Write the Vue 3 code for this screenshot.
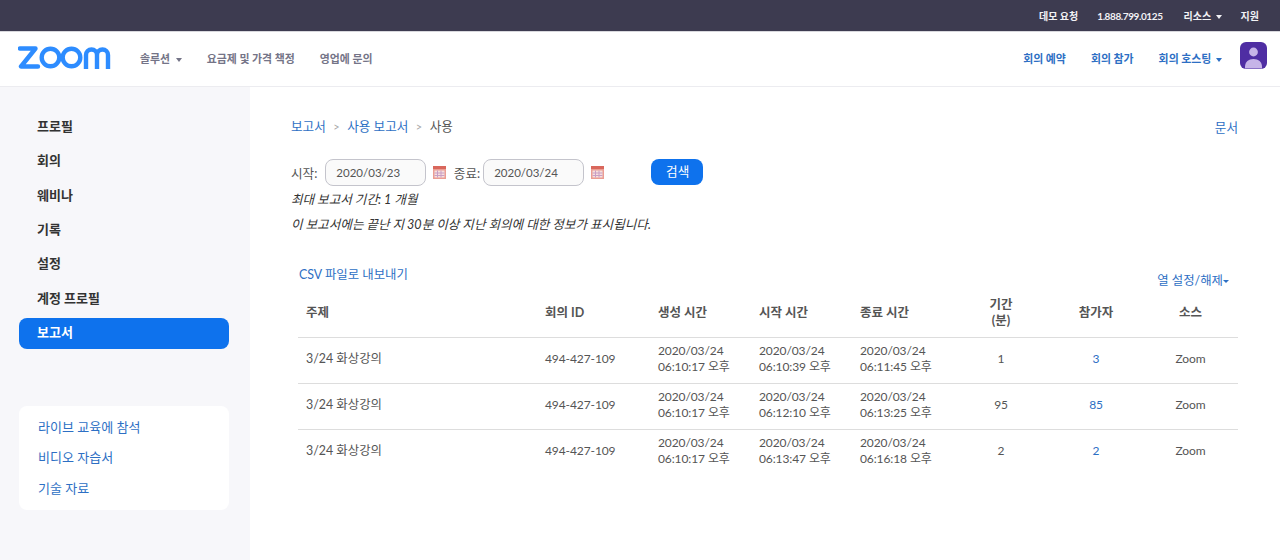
<template>
  <div class="page">
    <div class="topbar">
      <a>데모 요청</a>
      <a class="phone">1.888.799.0125</a>
      <a>리소스 <i class="caret"></i></a>
      <a>지원</a>
    </div>

    <header class="nav">
      <svg class="logo" width="94" height="23" viewBox="0 0 94 23" fill="none" stroke="#2d8cff" stroke-width="4.4">
        <path d="M2 2.500h15.500L3 20.500h17" stroke-linejoin="round" stroke-linecap="round" />
        <circle cx="32.500" cy="11.500" r="8.800" />
        <circle cx="53.500" cy="11.500" r="8.800" />
        <path d="M68 23V9a5.500 5.500 0 0 1 11 0V23M79 9a5.500 5.500 0 0 1 11 0V23" />
      </svg>
      <nav class="nav-left">
        <a>솔루션 <i class="caret"></i></a>
        <a>요금제 및 가격 책정</a>
        <a>영업에 문의</a>
      </nav>
      <nav class="nav-right">
        <a>회의 예약</a>
        <a>회의 참가</a>
        <a>회의 호스팅 <i class="caret"></i></a>
        <svg class="avatar" width="27" height="27" viewBox="0 0 27 27">
          <rect width="27" height="27" rx="6" fill="#4f2ea3" />
          <circle cx="13.500" cy="10" r="4.400" fill="#c6b4e8" />
          <path d="M5 26.500v-2c0-4.500 3.500-7.500 8.500-7.500s8.500 3 8.500 7.500v2z" fill="#c6b4e8" />
        </svg>
      </nav>
    </header>

    <div class="body">
      <aside class="side">
        <ul class="menu">
          <li v-for="item in menu" :key="item" :class="{ active: item === '보고서' }">{{ item }}</li>
        </ul>
        <div class="help">
          <a>라이브 교육에 참석</a>
          <a>비디오 자습서</a>
          <a>기술 자료</a>
        </div>
      </aside>

      <main class="main">
        <div class="crumbs">
          <div>
            <a>보고서</a><span class="sep">&gt;</span><a>사용 보고서</a><span class="sep">&gt;</span><span>사용</span>
          </div>
          <a class="docs">문서</a>
        </div>

        <div class="search">
          <label>시작:</label>
          <span class="date">2020/03/23</span>
          <svg class="cal" width="13" height="13" viewBox="0 0 13 13">
            <rect width="13" height="13" fill="#eb9d92" />
            <rect width="13" height="3" fill="#d9675c" />
            <path d="M1.500 4.500h10v7h-10z" fill="#f6dfdc" />
            <path d="M1.500 7h10M1.500 9.500h10M4.500 4.500v7M8 4.500v7" stroke="#c99ec4" stroke-width="1" />
          </svg>
          <label class="to">종료:</label>
          <span class="date">2020/03/24</span>
          <svg class="cal" width="13" height="13" viewBox="0 0 13 13">
            <rect width="13" height="13" fill="#eb9d92" />
            <rect width="13" height="3" fill="#d9675c" />
            <path d="M1.500 4.500h10v7h-10z" fill="#f6dfdc" />
            <path d="M1.500 7h10M1.500 9.500h10M4.500 4.500v7M8 4.500v7" stroke="#c99ec4" stroke-width="1" />
          </svg>
          <button class="btn">검색</button>
        </div>
        <p class="note first">최대 보고서 기간: 1 개월</p>
        <p class="note">이 보고서에는 끝난 지 30분 이상 지난 회의에 대한 정보가 표시됩니다.</p>

        <div class="tools">
          <a>CSV 파일로 내보내기</a>
          <a class="cols">열 설정/해제<i class="caret small"></i></a>
        </div>

        <table>
          <thead>
            <tr>
              <th class="c1">주제</th>
              <th class="c2">회의 ID</th>
              <th class="c3">생성 시간</th>
              <th class="c3">시작 시간</th>
              <th class="c3">종료 시간</th>
              <th class="c4 mid">기간<br />(분)</th>
              <th class="c5 mid">참가자</th>
              <th class="c6 mid">소스</th>
            </tr>
          </thead>
          <tbody>
            <tr v-for="row in rows" :key="row.start">
              <td class="topic">3/24 화상강의</td>
              <td>494-427-109</td>
              <td>2020/03/24<br />06:10:17 오후</td>
              <td>2020/03/24<br />{{ row.start }} 오후</td>
              <td>2020/03/24<br />{{ row.end }} 오후</td>
              <td class="mid">{{ row.mins }}</td>
              <td class="mid"><a class="count">{{ row.people }}</a></td>
              <td class="mid">Zoom</td>
            </tr>
          </tbody>
        </table>
      </main>
    </div>
  </div>
</template>

<script setup>
const menu = ['프로필', '회의', '웨비나', '기록', '설정', '계정 프로필', '보고서']

const rows = [
  { start: '06:10:39', end: '06:11:45', mins: 1, people: 3 },
  { start: '06:12:10', end: '06:13:25', mins: 95, people: 85 },
  { start: '06:13:47', end: '06:16:18', mins: 2, people: 2 }
]
</script>

<style>
body {
  background: #fff;
}
</style>

<style scoped>
.page {
  height: 560px;
  overflow: hidden;
  display: flex;
  flex-direction: column;
  font-family: Lato, "Noto Sans CJK KR", sans-serif;
  font-size: 12.600px;
  color: #555;
}
a {
  color: #2d6fc4;
}
.caret {
  display: inline-block;
  width: 0;
  height: 0;
  margin-left: 2px;
  vertical-align: middle;
  border-top: 4px solid currentColor;
  border-left: 3.500px solid transparent;
  border-right: 3.500px solid transparent;
}
.caret.small {
  margin-left: 0;
  border-top-width: 3px;
  border-left-width: 3px;
  border-right-width: 3px;
}
.topbar {
  height: 31px;
  flex: none;
  background: #3d3b50;
  display: flex;
  justify-content: flex-end;
  align-items: center;
  gap: 19px;
  padding-right: 21px;
  font-size: 10px;
  font-weight: 700;
}
.topbar a {
  color: #f2f2f5;
}
.topbar .phone {
  letter-spacing: -0.4px;
  margin-right: 2px;
}
.nav {
  height: 56px;
  flex: none;
  box-sizing: border-box;
  border-top: 1px solid #d8d8dd;
  border-bottom: 1px solid #ececf0;
  display: flex;
  align-items: center;
  padding: 0 13px 3px 18px;
  background: #fff;
}
.logo {
  flex: none;
}
.nav-left {
  display: flex;
  gap: 25px;
  margin-left: 28px;
  font-size: 10.900px;
  font-weight: 700;
}
.nav-left a {
  color: #747487;
}
.nav-left .caret {
  margin-left: 3px;
}
.nav-right {
  margin-left: auto;
  display: flex;
  align-items: center;
  gap: 25px;
  font-size: 10.900px;
  font-weight: 700;
}
.nav-right a {
  color: #2d6fc4;
}
.avatar {
  margin-left: -7px;
  margin-bottom: 5px;
}
.body {
  flex: 1;
  display: flex;
  min-height: 0;
}
.side {
  width: 250px;
  flex: none;
  background: #f7f7fa;
  padding: 25px 21px 0 19px;
  box-sizing: border-box;
}
.menu {
  list-style: none;
  margin: 0;
  padding: 0;
  font-size: 13px;
  font-weight: 700;
  color: #333;
}
.menu li {
  height: 31px;
  line-height: 29px;
  margin-bottom: 3.330px;
  padding-left: 18px;
  border-radius: 8px;
}
.menu li.active {
  background: #0e72ed;
  color: #fff;
}
.help {
  margin-top: 56.700px;
  height: 104px;
  background: #fff;
  border-radius: 8px;
  padding: 6px 19px;
  box-sizing: border-box;
  display: flex;
  flex-direction: column;
  font-size: 13px;
}
.help a {
  height: 30.500px;
  line-height: 30.500px;
}
.main {
  flex: 1;
  padding: 30px 42px 0 41px;
  min-width: 0;
}
.crumbs {
  display: flex;
  justify-content: space-between;
  height: 20px;
  line-height: 20px;
}
.sep {
  margin: 0 7.500px;
  color: #aaa;
  font-size: 11px;
}
.docs {
  margin-top: 1px;
}
.search {
  display: flex;
  align-items: center;
  margin-top: 21px;
  height: 28px;
}
.search label.to {
  margin-left: 8px;
}
.date {
  width: 101px;
  height: 27px;
  line-height: 25px;
  box-sizing: border-box;
  margin-left: 8px;
  padding-left: 10px;
  border: 1px solid #c4c4cc;
  border-radius: 8px;
  background: #fafafa;
  color: #555;
  font-size: 11.500px;
}
.date + .cal {
  margin-left: 6.500px;
  flex: none;
}
.to + .date {
  margin-left: 3px;
}
.btn {
  margin-left: 47px;
  width: 52px;
  height: 26px;
  border: 0;
  border-radius: 8px;
  background: #0e72ed;
  color: #fff;
  font: inherit;
  padding: 0 0 4px 2px;
}
.note {
  margin: 0;
  font-style: italic;
  color: #333;
  height: 25px;
  line-height: 25px;
}
.note.first {
  margin-top: 1px;
}
.tools {
  display: flex;
  justify-content: space-between;
  margin-top: 28px;
  padding: 0 9px 0 8px;
  height: 30px;
  font-size: 12.400px;
}
.cols {
  margin-top: 6px;
}
table {
  width: 940px;
  margin-left: 7px;
  border-collapse: collapse;
  table-layout: fixed;
  font-size: 12px;
  letter-spacing: -0.1px;
}
th {
  height: 42px;
  padding: 0 8px 5px;
  text-align: left;
  font-weight: 700;
  font-size: 12.500px;
  letter-spacing: 0;
  color: #555;
  border-bottom: 1px solid #ddd;
  line-height: 16px;
  box-sizing: border-box;
}
td {
  height: 46px;
  padding: 0 8px 2px;
  line-height: 16px;
  border-bottom: 1px solid #ddd;
  box-sizing: border-box;
}
td.topic {
  font-size: 12.400px;
  letter-spacing: 0;
}
tbody tr:last-child td {
  border-bottom: 0;
}
.c1 {
  width: 239px;
}
.c2 {
  width: 113px;
}
.c3 {
  width: 101px;
}
.c4 {
  width: 96px;
}
.c5 {
  width: 94px;
}
.c6 {
  width: 95px;
}
.mid {
  text-align: center;
}
</style>
